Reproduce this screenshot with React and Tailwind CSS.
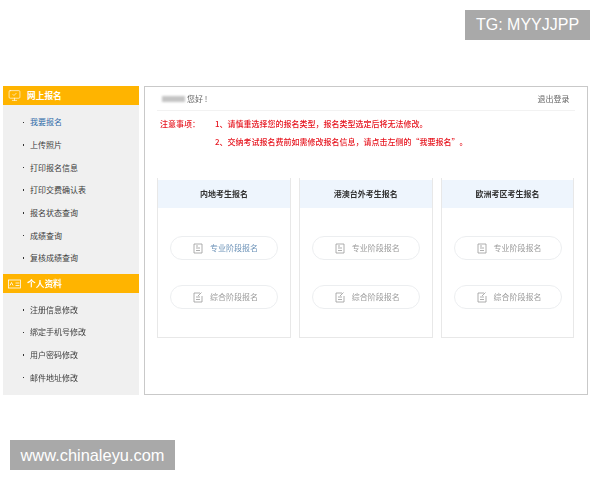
import { MonitorCheck } from "lucide-react";

const font = { fontFamily: '"Noto Sans CJK SC", "Liberation Sans", sans-serif' };
const latin = { fontFamily: '"Liberation Sans", sans-serif' };

const applyMenu = ["我要报名", "上传照片", "打印报名信息", "打印交费确认表", "报名状态查询", "成绩查询", "复核成绩查询"];
const profileMenu = ["注册信息修改", "绑定手机号修改", "用户密码修改", "邮件地址修改"];

const regions = [
  { title: "内地考生报名", active: true },
  { title: "港澳台外考生报名", active: false },
  { title: "欧洲考区考生报名", active: false },
];

// small document icon used in the pill buttons
const DocIcon = ({ pen }) => (
  <svg width="10" height="11" viewBox="0 0 10 11" fill="none" stroke="#9a9a9a" strokeWidth="0.8" className="shrink-0">
    <path d={pen ? "M7 1H1v9h8V4" : "M1 1h8v9H1z"} />
    <path d="M3 5h4M3 7.5h4" />
    {pen ? <path d="M5 4l3.5-3.5" /> : <path d="M3 3h2" />}
  </svg>
);

const MenuHeader = ({ title, icon }) => (
  <div className="flex h-[19px] items-center bg-[#ffb400] pl-[5px] text-[8.7px] font-bold text-white">
    {icon}
    <span className="ml-[6px]">{title}</span>
  </div>
);

const MenuList = ({ items, className }) => (
  <ul className={className}>
    {items.map((item) => (
      <li key={item} className="flex h-[22.65px] items-center pl-[19.5px] text-[8px] text-[#3c3c3c]">
        <span className="mr-[6px] h-[1.5px] w-[1.5px] bg-[#333]" />
        <span className={item === "我要报名" ? "text-[#2d6aa8]" : ""}>{item}</span>
      </li>
    ))}
  </ul>
);

const PillButton = ({ label, pen, active }) => (
  <button className="flex h-[24px] w-[108px] items-center rounded-full border border-[#eceef0] bg-white pl-[22px] text-[8px] text-[#9b9b9b]">
    <DocIcon pen={pen} />
    <span className={`ml-[7px] ${active ? "text-[#6d93b8]" : ""}`}>{label}</span>
  </button>
);

export default function App() {
  return (
    <div className="relative h-[480px] w-[600px] overflow-hidden bg-white" style={font}>
      <div className="flex gap-[5.5px] pl-[3px] pt-[86px] blur-[0.3px]">
        {/* left menu */}
        <aside className="h-[309px] w-[135.5px] bg-[#f0f0f0]">
          <MenuHeader title="网上报名" icon={<MonitorCheck size={13} strokeWidth={1.2} color="#fff" />} />
          <MenuList items={applyMenu} className="pt-[6px]" />
          <div className="mt-[5px]">
            <MenuHeader
              title="个人资料"
              icon={
                <svg width="13" height="10" viewBox="0 0 13 10" fill="none" stroke="#fff" strokeWidth="0.8">
                  <rect x="0.5" y="1" width="12" height="8" />
                  <path d="M2 6.5l1.5-3 1.5 3M7.5 4h4M7.5 6.5h4" />
                </svg>
              }
            />
          </div>
          <MenuList items={profileMenu} className="pt-[5px]" />
        </aside>

        {/* main panel */}
        <main className="h-[309px] w-[443.5px] border border-[#c9c9c9] px-[12px]">
          <div className="flex h-[24px] items-center justify-between border-b border-[#f2f2f2] pl-[5px] pr-[5px] text-[8px] text-[#666]">
            <div className="flex items-center gap-[2px]">
              <span className="h-[6px] w-[23px] bg-[#c4c4c4] blur-[1px]" />
              <span>您好 !</span>
            </div>
            <span>退出登录</span>
          </div>

          <div className="mt-[4px] flex text-[8px] font-medium leading-[18px] text-[#e6141e]">
            <span className="w-[58px] pl-[3px]">注意事项：</span>
            <div>
              <p>1、请慎重选择您的报名类型，报名类型选定后将无法修改。</p>
              <p>2、交纳考试报名费前如需修改报名信息，请点击左侧的“我要报名”。</p>
            </div>
          </div>

          <div className="mt-[27px] flex gap-[8px]">
            {regions.map((r) => (
              <section key={r.title} className="h-[160px] w-[134px] border border-t-0 border-[#e8e8e8] pt-[2px]">
                <h2 className="flex h-[28px] items-center justify-center bg-[#eef5fd] text-[8px] font-bold text-[#333]">
                  {r.title}
                </h2>
                <div className="flex flex-col items-center gap-[25px] pt-[28px]">
                  <PillButton label="专业阶段报名" active={r.active} />
                  <PillButton label="综合阶段报名" pen />
                </div>
              </section>
            ))}
          </div>
        </main>
      </div>

      {/* watermarks over the screenshot */}
      <div className="absolute left-[465px] top-[10px] flex h-[30px] w-[125px] items-center justify-center bg-[#a9a9a9] text-[16px] text-white" style={latin}>
        TG: MYYJJPP
      </div>
      <div className="absolute left-[10px] top-[440px] flex h-[30px] w-[165px] items-center justify-center bg-[#a9a9a9] text-[16.4px] text-white" style={latin}>
        www.chinaleyu.com
      </div>
    </div>
  );
}
